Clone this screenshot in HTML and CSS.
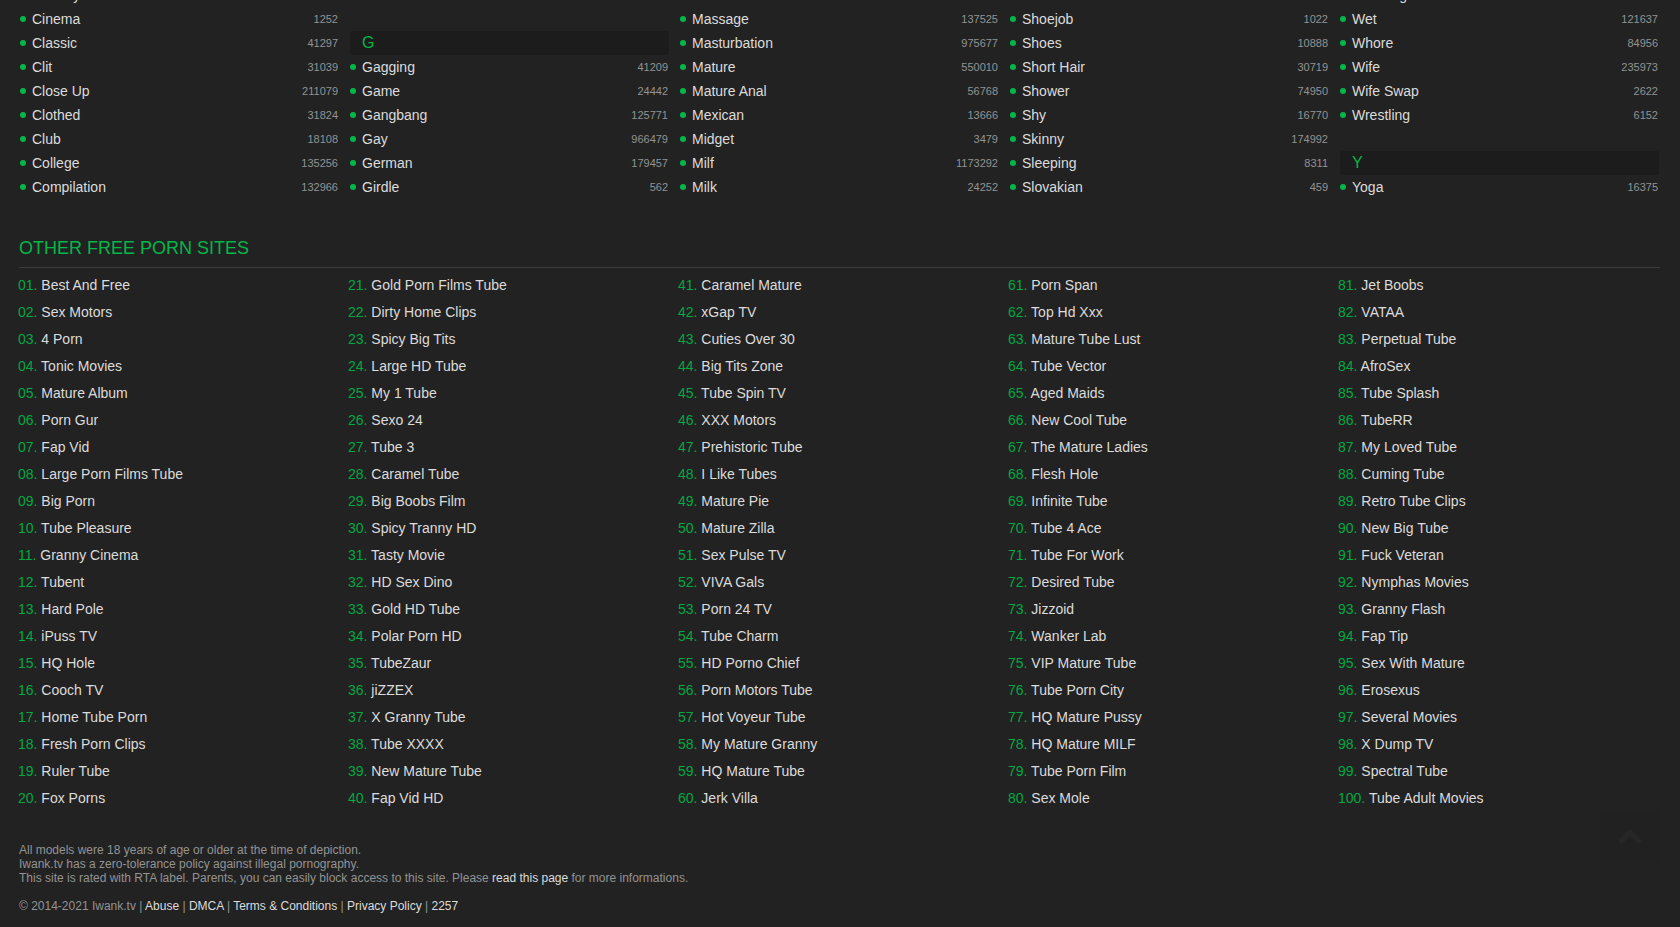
FILE: index.html
```html
<!DOCTYPE html>
<html lang="en">
<head>
<meta charset="utf-8">
<title>Categories</title>
<link rel="stylesheet" href="styles.css">
</head>
<body>
<main class="page">
<section class="categories">
<ul class="cat-list">
<li><a href="#">Chubby</a></li>
<li><a href="#">Cinema</a><span>1252</span></li>
<li><a href="#">Classic</a><span>41297</span></li>
<li><a href="#">Clit</a><span>31039</span></li>
<li><a href="#">Close Up</a><span>211079</span></li>
<li><a href="#">Clothed</a><span>31824</span></li>
<li><a href="#">Club</a><span>18108</span></li>
<li><a href="#">College</a><span>135256</span></li>
<li><a href="#">Compilation</a><span>132966</span></li>
</ul>
<ul class="cat-list">
<li class="letter">G</li>
<li><a href="#">Gagging</a><span>41209</span></li>
<li><a href="#">Game</a><span>24442</span></li>
<li><a href="#">Gangbang</a><span>125771</span></li>
<li><a href="#">Gay</a><span>966479</span></li>
<li><a href="#">German</a><span>179457</span></li>
<li><a href="#">Girdle</a><span>562</span></li>
</ul>
<ul class="cat-list">
<li><a href="#">Massage</a><span>137525</span></li>
<li><a href="#">Masturbation</a><span>975677</span></li>
<li><a href="#">Mature</a><span>550010</span></li>
<li><a href="#">Mature Anal</a><span>56768</span></li>
<li><a href="#">Mexican</a><span>13666</span></li>
<li><a href="#">Midget</a><span>3479</span></li>
<li><a href="#">Milf</a><span>1173292</span></li>
<li><a href="#">Milk</a><span>24252</span></li>
</ul>
<ul class="cat-list">
<li><a href="#">Shoejob</a><span>1022</span></li>
<li><a href="#">Shoes</a><span>10888</span></li>
<li><a href="#">Short Hair</a><span>30719</span></li>
<li><a href="#">Shower</a><span>74950</span></li>
<li><a href="#">Shy</a><span>16770</span></li>
<li><a href="#">Skinny</a><span>174992</span></li>
<li><a href="#">Sleeping</a><span>8311</span></li>
<li><a href="#">Slovakian</a><span>459</span></li>
</ul>
<ul class="cat-list">
<li><a href="#">Wedding</a></li>
<li><a href="#">Wet</a><span>121637</span></li>
<li><a href="#">Whore</a><span>84956</span></li>
<li><a href="#">Wife</a><span>235973</span></li>
<li><a href="#">Wife Swap</a><span>2622</span></li>
<li><a href="#">Wrestling</a><span>6152</span></li>
<li class="letter spaced">Y</li>
<li><a href="#">Yoga</a><span>16375</span></li>
</ul>
</section>
<h2 class="title">OTHER FREE PORN SITES</h2>
<section class="sites">
<ul class="site-list">
<li>01. <a href="#">Best And Free</a></li>
<li>02. <a href="#">Sex Motors</a></li>
<li>03. <a href="#">4 Porn</a></li>
<li>04. <a href="#">Tonic Movies</a></li>
<li>05. <a href="#">Mature Album</a></li>
<li>06. <a href="#">Porn Gur</a></li>
<li>07. <a href="#">Fap Vid</a></li>
<li>08. <a href="#">Large Porn Films Tube</a></li>
<li>09. <a href="#">Big Porn</a></li>
<li>10. <a href="#">Tube Pleasure</a></li>
<li>11. <a href="#">Granny Cinema</a></li>
<li>12. <a href="#">Tubent</a></li>
<li>13. <a href="#">Hard Pole</a></li>
<li>14. <a href="#">iPuss TV</a></li>
<li>15. <a href="#">HQ Hole</a></li>
<li>16. <a href="#">Cooch TV</a></li>
<li>17. <a href="#">Home Tube Porn</a></li>
<li>18. <a href="#">Fresh Porn Clips</a></li>
<li>19. <a href="#">Ruler Tube</a></li>
<li>20. <a href="#">Fox Porns</a></li>
</ul>
<ul class="site-list">
<li>21. <a href="#">Gold Porn Films Tube</a></li>
<li>22. <a href="#">Dirty Home Clips</a></li>
<li>23. <a href="#">Spicy Big Tits</a></li>
<li>24. <a href="#">Large HD Tube</a></li>
<li>25. <a href="#">My 1 Tube</a></li>
<li>26. <a href="#">Sexo 24</a></li>
<li>27. <a href="#">Tube 3</a></li>
<li>28. <a href="#">Caramel Tube</a></li>
<li>29. <a href="#">Big Boobs Film</a></li>
<li>30. <a href="#">Spicy Tranny HD</a></li>
<li>31. <a href="#">Tasty Movie</a></li>
<li>32. <a href="#">HD Sex Dino</a></li>
<li>33. <a href="#">Gold HD Tube</a></li>
<li>34. <a href="#">Polar Porn HD</a></li>
<li>35. <a href="#">TubeZaur</a></li>
<li>36. <a href="#">jiZZEX</a></li>
<li>37. <a href="#">X Granny Tube</a></li>
<li>38. <a href="#">Tube XXXX</a></li>
<li>39. <a href="#">New Mature Tube</a></li>
<li>40. <a href="#">Fap Vid HD</a></li>
</ul>
<ul class="site-list">
<li>41. <a href="#">Caramel Mature</a></li>
<li>42. <a href="#">xGap TV</a></li>
<li>43. <a href="#">Cuties Over 30</a></li>
<li>44. <a href="#">Big Tits Zone</a></li>
<li>45. <a href="#">Tube Spin TV</a></li>
<li>46. <a href="#">XXX Motors</a></li>
<li>47. <a href="#">Prehistoric Tube</a></li>
<li>48. <a href="#">I Like Tubes</a></li>
<li>49. <a href="#">Mature Pie</a></li>
<li>50. <a href="#">Mature Zilla</a></li>
<li>51. <a href="#">Sex Pulse TV</a></li>
<li>52. <a href="#">VIVA Gals</a></li>
<li>53. <a href="#">Porn 24 TV</a></li>
<li>54. <a href="#">Tube Charm</a></li>
<li>55. <a href="#">HD Porno Chief</a></li>
<li>56. <a href="#">Porn Motors Tube</a></li>
<li>57. <a href="#">Hot Voyeur Tube</a></li>
<li>58. <a href="#">My Mature Granny</a></li>
<li>59. <a href="#">HQ Mature Tube</a></li>
<li>60. <a href="#">Jerk Villa</a></li>
</ul>
<ul class="site-list">
<li>61. <a href="#">Porn Span</a></li>
<li>62. <a href="#">Top Hd Xxx</a></li>
<li>63. <a href="#">Mature Tube Lust</a></li>
<li>64. <a href="#">Tube Vector</a></li>
<li>65. <a href="#">Aged Maids</a></li>
<li>66. <a href="#">New Cool Tube</a></li>
<li>67. <a href="#">The Mature Ladies</a></li>
<li>68. <a href="#">Flesh Hole</a></li>
<li>69. <a href="#">Infinite Tube</a></li>
<li>70. <a href="#">Tube 4 Ace</a></li>
<li>71. <a href="#">Tube For Work</a></li>
<li>72. <a href="#">Desired Tube</a></li>
<li>73. <a href="#">Jizzoid</a></li>
<li>74. <a href="#">Wanker Lab</a></li>
<li>75. <a href="#">VIP Mature Tube</a></li>
<li>76. <a href="#">Tube Porn City</a></li>
<li>77. <a href="#">HQ Mature Pussy</a></li>
<li>78. <a href="#">HQ Mature MILF</a></li>
<li>79. <a href="#">Tube Porn Film</a></li>
<li>80. <a href="#">Sex Mole</a></li>
</ul>
<ul class="site-list">
<li>81. <a href="#">Jet Boobs</a></li>
<li>82. <a href="#">VATAA</a></li>
<li>83. <a href="#">Perpetual Tube</a></li>
<li>84. <a href="#">AfroSex</a></li>
<li>85. <a href="#">Tube Splash</a></li>
<li>86. <a href="#">TubeRR</a></li>
<li>87. <a href="#">My Loved Tube</a></li>
<li>88. <a href="#">Cuming Tube</a></li>
<li>89. <a href="#">Retro Tube Clips</a></li>
<li>90. <a href="#">New Big Tube</a></li>
<li>91. <a href="#">Fuck Veteran</a></li>
<li>92. <a href="#">Nymphas Movies</a></li>
<li>93. <a href="#">Granny Flash</a></li>
<li>94. <a href="#">Fap Tip</a></li>
<li>95. <a href="#">Sex With Mature</a></li>
<li>96. <a href="#">Erosexus</a></li>
<li>97. <a href="#">Several Movies</a></li>
<li>98. <a href="#">X Dump TV</a></li>
<li>99. <a href="#">Spectral Tube</a></li>
<li>100. <a href="#">Tube Adult Movies</a></li>
</ul>
</section>
<footer class="footer">
<p>All models were 18 years of age or older at the time of depiction.<br>
Iwank.tv has a zero-tolerance policy against illegal pornography.<br>
This site is rated with RTA label. Parents, you can easily block access to this site. Please <a href="#">read this page</a> for more informations.</p>
<p>© 2014-2021 Iwank.tv | <a href="#">Abuse</a> | <a href="#">DMCA</a> | <a href="#">Terms &amp; Conditions</a> | <a href="#">Privacy Policy</a> | <a href="#">2257</a></p>
</footer>
</main>
<button class="to-top" type="button" aria-label="Back to top">
<svg width="24" height="16" viewBox="0 0 24 16" aria-hidden="true"><path d="M2 13.500L12 3.500L22 13.500" fill="none" stroke="currentColor" stroke-width="5"/></svg>
</button>
</body>
</html>
```

FILE: styles.css
```css
html {
  overflow: hidden;
}

body {
  margin: 0;
  background: #222;
  color: #dcdcdc;
  font-family: "Liberation Sans", Arial, sans-serif;
  font-size: 14px;
}

a {
  color: inherit;
  text-decoration: none;
}

ul {
  margin: 0;
  padding: 0;
  list-style: none;
}

/* The page is scrolled part-way down: the first category row is cut off. */
.page {
  margin-top: -17px;
  padding: 0 20px 0 19px;
}

.categories,
.sites {
  display: grid;
  grid-template-columns: repeat(5, 1fr);
  gap: 11px;
}

.categories {
  align-items: end;
  margin: 0 1px;
}

.cat-list li {
  display: flex;
  align-items: center;
  height: 24px;
}

.cat-list li::before {
  content: "";
  width: 6px;
  height: 6px;
  margin-right: 6px;
  border-radius: 50%;
  background: #00b74a;
}

.cat-list a {
  flex: 1;
}

.cat-list span {
  margin-right: 1px;
  color: #939393;
  font-size: 11px;
}

.cat-list .letter {
  padding-left: 12px;
  border-radius: 3px;
  background: #1c1c1c;
  color: #00b74a;
  font-size: 16px;
}

.cat-list .letter::before {
  display: none;
}

.cat-list .spaced {
  margin-top: 24px;
}

.title {
  margin: 37px 0 4px;
  padding-bottom: 7px;
  border-bottom: 1px solid #3c3c3c;
  color: #00b74a;
  font-size: 18px;
  font-weight: 400;
  line-height: 24px;
}

.sites {
  margin-left: -1px;
  margin-right: 3px;
}

.site-list li {
  color: #00a843;
  line-height: 27px;
}

.site-list a {
  color: #dcdcdc;
}

.footer {
  padding-top: 31px;
  color: #939393;
  font-size: 12px;
  line-height: 14px;
}

.footer p {
  margin: 0 0 14px;
}

.footer a {
  color: #dcdcdc;
}

.to-top {
  position: fixed;
  right: 20px;
  bottom: 66px;
  display: flex;
  align-items: center;
  justify-content: center;
  width: 60px;
  height: 49px;
  padding: 0;
  border: 0;
  border-radius: 3px;
  background: #212121;
  color: #272727;
}
```
